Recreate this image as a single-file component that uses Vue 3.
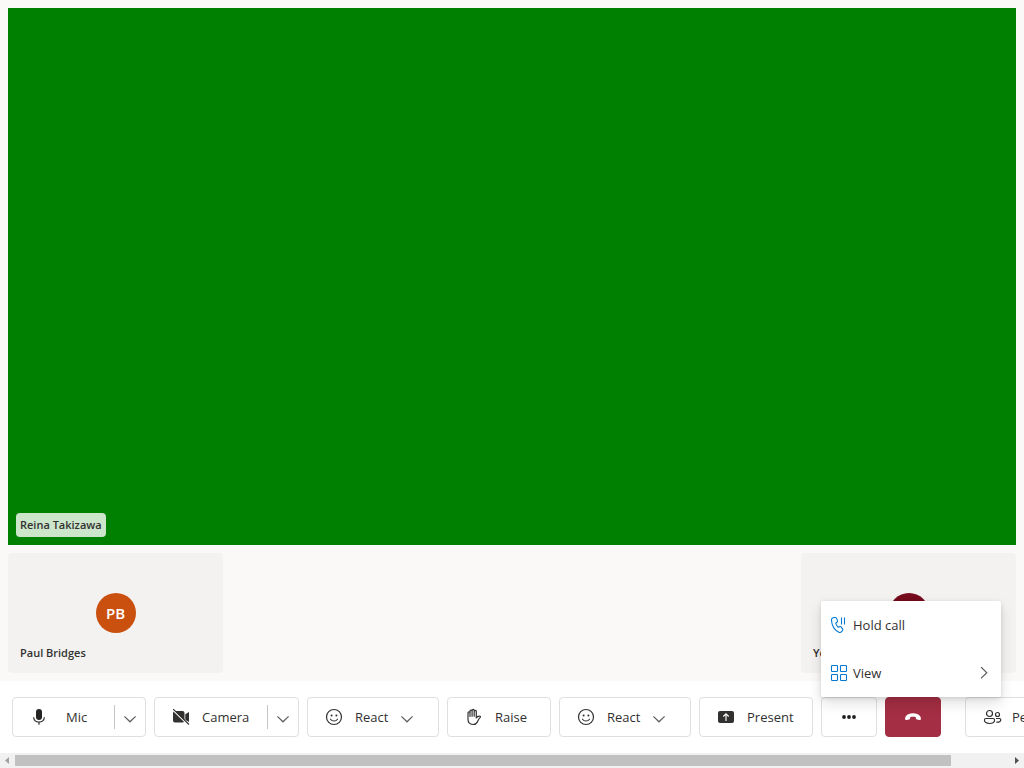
<script setup>
const controls = [
  { id: 'mic', label: 'Mic', kind: 'split', icon: 'mic' },
  { id: 'camera', label: 'Camera', kind: 'split', icon: 'camera' },
  { id: 'react-a', label: 'React', kind: 'menu', icon: 'smile' },
  { id: 'raise', label: 'Raise', kind: 'plain', icon: 'hand' },
  { id: 'react-b', label: 'React', kind: 'menu', icon: 'smile' },
  { id: 'present', label: 'Present', kind: 'plain', icon: 'present' }
]
</script>

<template>
  <div class="call">
    <main class="stage">
      <section class="speaker">
        <span class="name-tag">Reina Takizawa</span>
      </section>
      <section class="strip">
        <article class="tile">
          <span class="avatar">PB</span>
          <span class="tile-name">Paul Bridges</span>
        </article>
        <article class="tile">
          <span class="avatar wine"></span>
          <span class="tile-name">You</span>
        </article>
      </section>
    </main>

    <footer class="bar">
      <div v-for="c in controls" :key="c.id" class="control" :class="c.id.split('-')[0]">
        <button type="button" class="main-btn">
          <svg class="icon" viewBox="0 0 16 16" aria-hidden="true">
            <g v-if="c.icon === 'mic'">
              <rect x="5" y="0" width="6" height="11" rx="3" fill="#252423" />
              <path d="M2.6 8.300c.3 2.900 2.500 4.800 5.400 4.800s5.100-1.900 5.400-4.800M8 13v2.800" fill="none" stroke="#323130" stroke-width="1.200" />
            </g>
            <g v-else-if="c.icon === 'camera'">
              <path d="M2 2h7.500a2 2 0 0 1 2 2v7.500a2 2 0 0 1-2 2h-7.500a2 2 0 0 1-2-2v-7.500a2 2 0 0 1 2-2zM12.300 5.200 16 3v10l-3.700-2.300z" fill="#323130" />
              <path d="M-.5.8 15.500 16.300" stroke="#fff" stroke-width="1.300" />
              <path d="M.2.2 16 15.500" stroke="#323130" stroke-width="1.100" />
            </g>
            <g v-else-if="c.icon === 'smile'">
              <circle cx="8" cy="8" r="7.500" fill="none" stroke="#323130" stroke-width="1.200" />
              <circle cx="5.600" cy="6.500" r="1" fill="#323130" />
              <circle cx="10.400" cy="6.500" r="1" fill="#323130" />
              <path d="M4.500 10.200c1.700 2.400 5.300 2.400 7 0" fill="none" stroke="#323130" stroke-width="1.100" stroke-linecap="round" />
            </g>
            <g v-else-if="c.icon === 'hand'" fill="none" stroke="#323130" stroke-width="1.200" stroke-linejoin="round" stroke-linecap="round">
              <path d="M2 8V3.800a1 1 0 0 1 2 0V2.200a1 1 0 0 1 2.100 0V1.500a1 1 0 0 1 2.100 0v1a1 1 0 0 1 2.100 0V9c1-1.500 2.200-2.200 3.700-1.700.6.200.6.700.2 1.100-1.500 1.300-2 3-2.900 4.700-.9 1.700-2.200 2.400-4.300 2.400-3.600 0-5-2.200-5-5.500zM4 4v3.500M6.100 2.500v4.700M8.200 2.500v4.700" />
            </g>
            <g v-else>
              <rect x="0" y="2" width="16" height="12" rx="2" fill="#323130" />
              <path d="M8 12V5M5.300 7.500 8 4.800l2.700 2.700" fill="none" stroke="#fff" stroke-width="1.100" />
            </g>
          </svg>
          <span class="label">{{ c.label }}</span>
          <svg v-if="c.kind === 'menu'" class="chev" viewBox="0 0 12 12" aria-hidden="true"><path d="m.4 5.400 5.600 5.400 5.600-5.400" /></svg>
        </button>
        <button v-if="c.kind === 'split'" type="button" class="split-btn" :aria-label="c.label + ' options'">
          <svg class="chev" viewBox="0 0 12 12" aria-hidden="true"><path d="m.4 5.400 5.600 5.400 5.600-5.400" /></svg>
        </button>
      </div>

      <div class="more-wrap">
        <button type="button" class="square" aria-label="More options" aria-expanded="true">
          <svg class="icon" viewBox="0 0 16 16" fill="#201f1e" aria-hidden="true">
            <circle cx="3" cy="8" r="1.900" /><circle cx="8" cy="8" r="1.900" /><circle cx="13" cy="8" r="1.900" />
          </svg>
        </button>
        <div class="menu" role="menu">
          <button type="button" class="item" role="menuitem">
            <svg class="icon" viewBox="0 0 16 16" fill="none" stroke="#0078d4" stroke-width="1.100" stroke-linejoin="round" aria-hidden="true">
              <path d="M2 .8 3.800.5c.8-.1 1.500.2 1.800.9l.8 2c.2.600.1 1.200-.3 1.600L4.700 6.200c.4 1.500 1.200 2.800 2.300 3.900l1.800-.5c.6-.2 1.100 0 1.500.5l1.300 1.800c.4.600.3 1.200-.1 1.700l-.9 1c-.7.800-1.700 1.100-2.700.6C3.500 13.200.8 8.800.5 3.300.4 2.100.9 1.100 2 .8zM10.500.5v7M13.500.5v7" />
            </svg>
            <span>Hold call</span>
          </button>
          <button type="button" class="item" role="menuitem">
            <svg class="icon" viewBox="0 0 16 16" fill="none" stroke="#0078d4" stroke-width="1.100" aria-hidden="true">
              <rect x=".5" y=".5" width="6" height="6" rx=".8" /><rect x="9.500" y=".5" width="6" height="6" rx=".8" />
              <rect x=".5" y="9.500" width="6" height="6" rx=".8" /><rect x="9.500" y="9.500" width="6" height="6" rx=".8" />
            </svg>
            <span>View</span>
            <svg class="chev side" viewBox="0 0 12 12" aria-hidden="true"><path d="m3 0 5.800 5.700-5.800 5.700" /></svg>
          </button>
        </div>
      </div>

      <button type="button" class="square end" aria-label="Leave call">
        <svg class="icon" viewBox="0 0 16 16" fill="#fff" aria-hidden="true">
          <path d="M8 4.200c3.200 0 5.600 1 6.900 2.700.9 1.100 1.200 2.300.9 3.300-.2.700-.7 1-1.500.8l-2.200-.4c-.7-.1-1.100-.5-1.200-1.200l-.2-1.300c-1.700-.5-3.700-.5-5.400 0l-.2 1.300c-.1.700-.5 1.100-1.200 1.200l-2.200.4c-.8.200-1.300-.1-1.500-.8-.3-1 0-2.200.9-3.300C2.400 5.200 4.800 4.200 8 4.200z" />
        </svg>
      </button>

      <div class="control people">
        <button type="button" class="main-btn">
          <svg class="icon wide" viewBox="0 0 18 16" fill="none" stroke="#323130" stroke-width="1.200" aria-hidden="true">
            <circle cx="5.500" cy="4.500" r="3" /><circle cx="13.500" cy="5.500" r="2" />
            <path d="M2 9.500h7c1.100 0 1.600.6 1.600 1.500 0 2.300-2 3.500-5.100 3.500s-5.100-1.200-5.100-3.500c0-.9.500-1.500 1.600-1.500zM12 9.500h3.300c1 0 1.500.5 1.500 1.300 0 1.700-1.800 2.700-4.500 2.300" />
          </svg>
          <span class="label">People</span>
        </button>
      </div>
    </footer>

    <div class="scroll" aria-hidden="true">
      <svg class="arrow" viewBox="0 0 15 15"><path d="M9 4v7L5 7.500z" fill="#a3a3a3" /></svg>
      <div class="track"><div class="thumb"></div></div>
      <svg class="arrow" viewBox="0 0 15 15"><path d="M6 4v7l4-3.500z" fill="#505050" /></svg>
    </div>
  </div>
</template>

<style>
html, body { margin: 0; overflow: hidden; }
</style>

<style scoped>
.call {
  display: flex;
  flex-direction: column;
  height: 100vh;
  background: #fff;
  color: #323130;
  font-family: "Open Sans", "Noto Sans", sans-serif;
  font-size: 13px;
  line-height: 20px;
}
button {
  margin: 0;
  padding: 0;
  border: 0;
  background: none;
  color: inherit;
  font: inherit;
  cursor: pointer;
}
.stage {
  flex: 1;
  display: flex;
  flex-direction: column;
  gap: 8px;
  padding: 8px;
  background: #faf9f8;
}
.speaker {
  flex: 1;
  display: flex;
  align-items: flex-end;
  padding: 8px;
  background: #008000;
}
.name-tag, .tile-name {
  font-size: 11px;
  line-height: 16px;
  font-weight: 600;
  white-space: nowrap;
}
.name-tag {
  padding: 4px;
  border-radius: 4px;
  background: rgba(255, 255, 255, 0.8);
}
.strip { display: flex; justify-content: space-between; }
.tile {
  position: relative;
  display: grid;
  place-items: center;
  width: 215px;
  height: 120px;
  border-radius: 4px;
  background: #f3f2f1;
}
.tile-name { position: absolute; left: 12px; bottom: 12px; }
.avatar {
  width: 40px;
  height: 40px;
  border-radius: 50%;
  background: #ca5010;
  color: #fff;
  font-size: 15px;
  line-height: 40px;
  font-weight: 600;
  text-align: center;
}
.wine { background: #750b1c; }
.bar {
  display: flex;
  gap: 8px;
  padding: 16px 12px;
}
.control, .square {
  box-sizing: border-box;
  flex: none;
  display: flex;
  align-items: center;
  height: 40px;
  border: 1px solid #e1dfdd;
  border-radius: 4px;
  background: #fff;
}
.main-btn {
  flex: 1;
  display: flex;
  align-items: center;
  gap: 13px;
  height: 100%;
  padding-left: 18px;
}
.mic { min-width: 134px; }
.camera { min-width: 145px; }
.react { min-width: 132px; }
.raise { min-width: 104px; }
.present { min-width: 114px; }
.people { min-width: 110px; margin-left: 16px; }
.mic .main-btn { gap: 19px; }
.people .main-btn { gap: 10px; }
.split-btn {
  display: grid;
  place-items: center;
  width: 31px;
  height: 24px;
  border-left: 1px solid #c8c6c4;
}
.icon { flex: none; width: 16px; height: 16px; overflow: visible; }
.wide { width: 18px; }
.chev {
  flex: none;
  width: 12px;
  height: 12px;
  fill: none;
  stroke: #605e5c;
  stroke-width: 1.2;
}
.square { justify-content: center; width: 56px; }
.end { border-color: #a42e43; background: #a42e43; }
.more-wrap { position: relative; }
.menu {
  position: absolute;
  left: 0;
  bottom: 100%;
  width: 180px;
  border-radius: 2px;
  background: #fff;
  box-shadow: 0 6px 14px rgba(0, 0, 0, 0.13), 0 1px 4px rgba(0, 0, 0, 0.11);
}
.item {
  display: flex;
  align-items: center;
  gap: 6px;
  width: 100%;
  height: 48px;
  padding: 0 11px 0 10px;
}
.side { margin-left: auto; }
.scroll { display: flex; height: 15px; background: #f1f1f1; }
.arrow { flex: none; width: 15px; height: 15px; }
.track { flex: 1; padding: 2px 0; }
.thumb { width: 94.2%; height: 11px; background: #c1c1c1; }
</style>
